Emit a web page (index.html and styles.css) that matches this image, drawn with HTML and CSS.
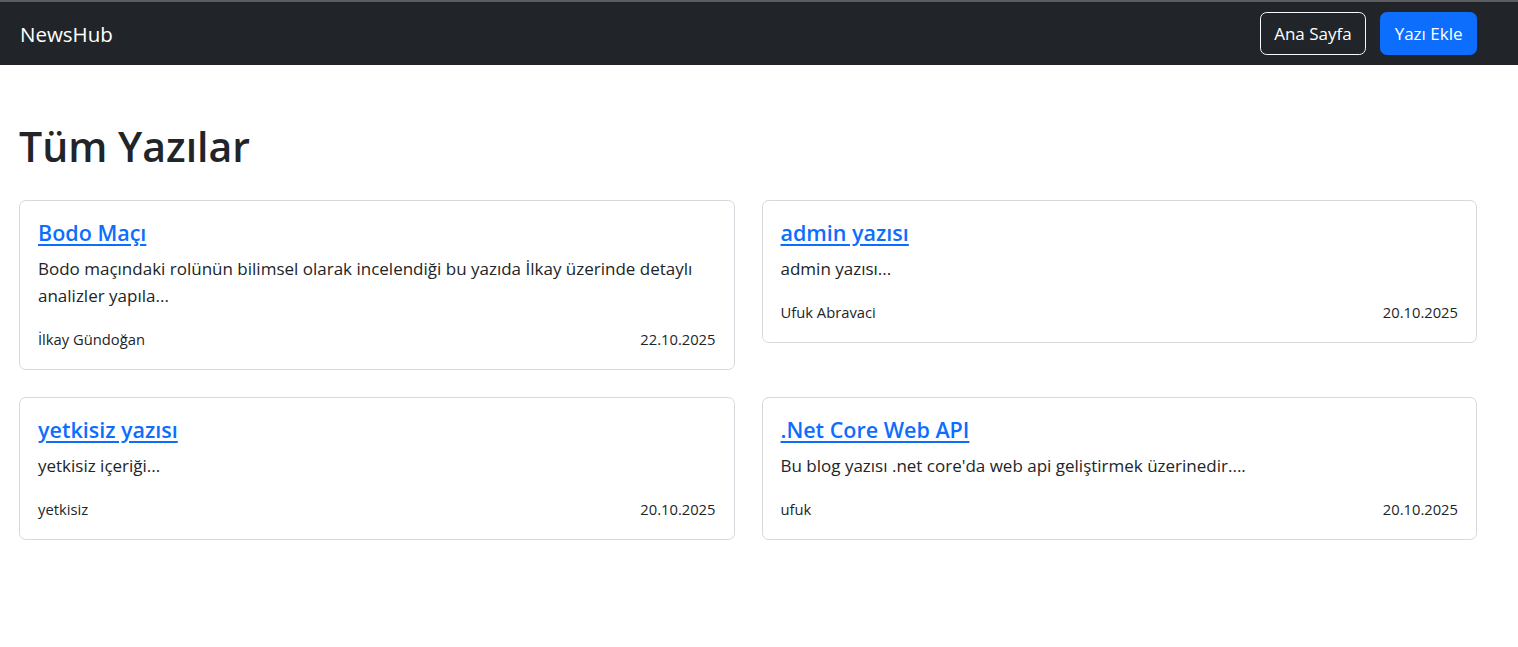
FILE: index.html
```html
<!DOCTYPE html>
<html lang="tr">
<head>
<meta charset="utf-8">
<title>NewsHub</title>
<link rel="stylesheet" href="styles.css">
</head>
<body>
<div class="topline"></div>
<nav class="navbar">
  <a class="brand" href="#">NewsHub</a>
  <div class="nav-actions">
    <a class="btn btn-outline" href="#">Ana Sayfa</a>
    <a class="btn btn-primary" href="#">Yazı Ekle</a>
  </div>
</nav>
<main class="container">
  <h1 class="page-title">Tüm Yazılar</h1>
  <div class="grid">
    <article class="card">
      <h5 class="card-title"><a href="#">Bodo Maçı</a></h5>
      <p class="card-text">Bodo maçındaki rolünün bilimsel olarak incelendiği bu yazıda İlkay üzerinde detaylı analizler yapıla...</p>
      <div class="card-meta"><span>İlkay Gündoğan</span><span>22.10.2025</span></div>
    </article>
    <article class="card">
      <h5 class="card-title"><a href="#">admin yazısı</a></h5>
      <p class="card-text">admin yazısı...</p>
      <div class="card-meta"><span>Ufuk Abravaci</span><span>20.10.2025</span></div>
    </article>
    <article class="card">
      <h5 class="card-title"><a href="#">yetkisiz yazısı</a></h5>
      <p class="card-text">yetkisiz içeriği...</p>
      <div class="card-meta"><span>yetkisiz</span><span>20.10.2025</span></div>
    </article>
    <article class="card">
      <h5 class="card-title"><a href="#">.Net Core Web API</a></h5>
      <p class="card-text">Bu blog yazısı .net core'da web api geliştirmek üzerinedir....</p>
      <div class="card-meta"><span>ufuk</span><span>20.10.2025</span></div>
    </article>
  </div>
</main>
</body>
</html>
```
FILE: styles.css
```css
* { box-sizing: border-box; }

html, body {
  margin: 0;
  padding: 0;
  background: #ffffff;
}

body {
  font-family: "Open Sans", "Noto Sans", "Liberation Sans", sans-serif;
  font-size: 17px;
  line-height: 27px;
  color: #212529;
}

.topline {
  height: 2px;
  background: #5b5d60;
}

.navbar {
  height: 63px;
  background: #212529;
  display: flex;
  align-items: center;
  justify-content: space-between;
  padding: 0 41px 0 20px;
}

.brand {
  color: #ffffff;
  text-decoration: none;
  font-size: 20.5px;
  line-height: 30px;
}

.nav-actions {
  display: flex;
  gap: 14px;
  padding-bottom: 1px;
}

.btn {
  display: inline-flex;
  align-items: center;
  height: 43px;
  padding: 0 13.5px;
  border-radius: 6.75px;
  font-size: 17px;
  color: #ffffff;
  text-decoration: none;
  border: 1px solid transparent;
}

.btn-outline {
  border-color: #f8f9fa;
}

.btn-primary {
  background: #0d6efd;
  border-color: #0d6efd;
}

.container {
  padding: 0 41px 60px 19px;
}

.page-title {
  margin: 56px 0 29px;
  font-size: 41px;
  line-height: 50px;
  font-weight: 600;
  color: #212529;
}

.grid {
  display: grid;
  grid-template-columns: 1fr 1fr;
  gap: 27px;
  align-items: start;
}

.card {
  border: 1px solid #d5d8dc;
  border-radius: 6.75px;
  padding: 18px;
  background: #ffffff;
}

.card-title {
  margin: 0 0 9px;
  font-size: 21.5px;
  line-height: 27px;
  font-weight: 600;
}

.card-title a {
  color: #0d6efd;
  text-decoration: underline;
  text-underline-offset: 3px;
}

.card-text {
  margin: 0 0 18px;
}

.card-meta {
  display: flex;
  justify-content: space-between;
  font-size: 14.75px;
  line-height: 24px;
}
```
